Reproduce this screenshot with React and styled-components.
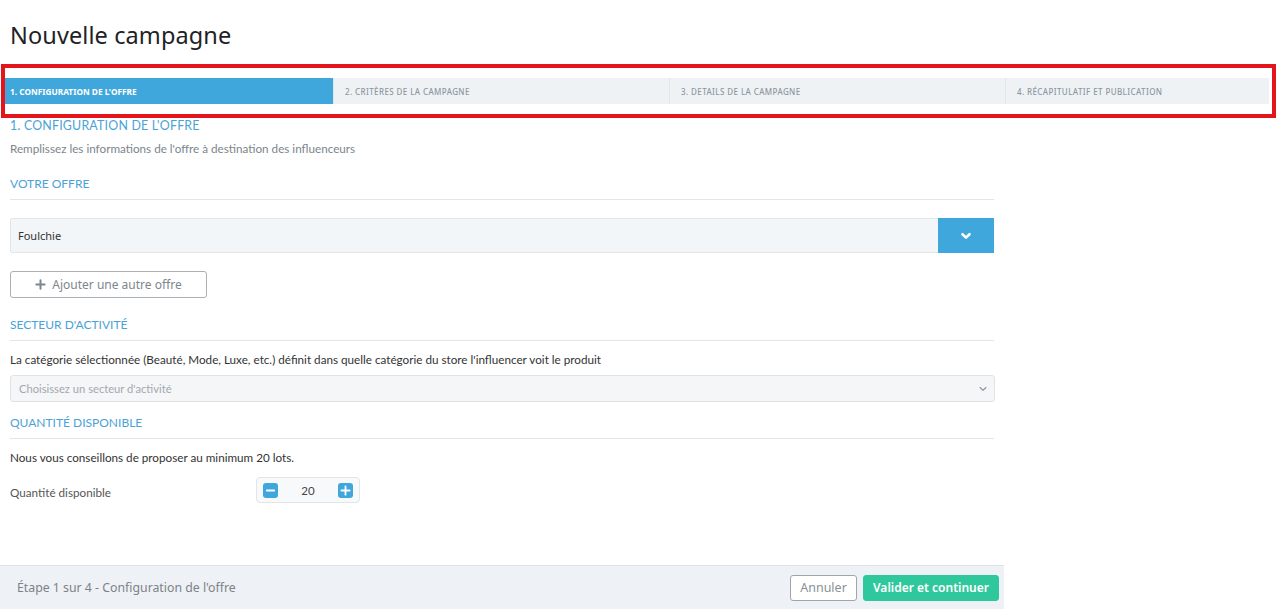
import React from "react";
import styled, { createGlobalStyle } from "styled-components";

const GlobalStyle = createGlobalStyle`
  html, body {
    margin: 0;
    padding: 0;
    background: #fff;
    font-family: Lato, "Open Sans", sans-serif;
  }
  * { box-sizing: border-box; }
`;

const Page = styled.div`
  width: 1280px;
  height: 609px;
  overflow: hidden;
  display: flex;
  flex-direction: column;
`;

const Title = styled.h1`
  margin: 0;
  padding: 19px 10px 0;
  height: 64px;
  font-family: "Noto Sans", "Open Sans", sans-serif;
  font-weight: 400;
  font-size: 23.5px;
  color: #1f2226;
  letter-spacing: 0.1px;
`;

const Highlight = styled.div`
  margin: 0 4px 0 1px;
  border: 4px solid #e3141c;
  padding: 10px 3px 10px 0;
  height: 54px;
`;

const Steps = styled.div`
  display: flex;
  height: 26px;
  background: #eff2f5;
`;

const Step = styled.div`
  flex: ${(p) => (p.$width ? `0 0 ${p.$width}px` : "1")};
  display: flex;
  align-items: center;
  background: ${(p) => (p.$active ? "#3fa7db" : "#eff2f5")};
  border-left: ${(p) => (p.$first ? "none" : "1px solid #e2e6ea")};
  color: ${(p) => (p.$active ? "#fff" : "#8c98a2")};
  font-family: "Noto Sans", sans-serif;
  font-size: ${(p) => (p.$active ? "8.3px" : "8px")};
  font-weight: ${(p) => (p.$active ? 700 : 500)};
  text-transform: uppercase;
  letter-spacing: ${(p) => (p.$active ? "0" : "0.4px")};
  padding-left: ${(p) => (p.$first ? "5px" : "11px")};
`;

const Content = styled.div`
  width: 1004px;
  padding: 0 10px;
  flex: 1;
`;

const StepTitle = styled.div`
  font-size: 12.4px;
  color: #4aa3d6;
  letter-spacing: 0.2px;
`;

const Intro = styled.div`
  font-size: 11.7px;
  color: #7b858d;
  margin-top: 8px;
`;

const Section = styled.div`
  font-size: 12px;
  color: #4aa3d6;
  text-transform: uppercase;
  padding: ${(p) => p.$pad || "22px 0 8px"};
  border-bottom: 1px solid #e3e6e9;
  width: 984px;
`;

const SelectBox = styled.div`
  display: flex;
  align-items: stretch;
  margin-top: 18px;
  width: 984px;
  height: 35px;
  background: #f3f6f8;
  border: 1px solid #e2e6e9;
  border-radius: 2px;
`;

const SelectValue = styled.div`
  flex: 1;
  display: flex;
  align-items: center;
  padding-left: 7px;
  font-family: "Noto Sans", sans-serif;
  font-size: 11px;
  color: #333;
`;

const SelectButton = styled.div`
  width: 56px;
  margin: -1px -1px -1px 0;
  background: #3fa7db;
  display: flex;
  align-items: center;
  justify-content: center;
`;

const OutlineButton = styled.button`
  margin-top: 18px;
  width: 197px;
  height: 27px;
  border: 1px solid #a9b0b6;
  border-radius: 3px;
  background: #fff;
  display: flex;
  align-items: center;
  justify-content: center;
  gap: 6px;
  font-family: "Noto Sans", sans-serif;
  font-size: 12px;
  color: #7e868d;
  padding: 0;
`;

const Help = styled.div`
  font-size: 11.7px;
  color: #333;
  margin-top: 11px;
`;

const NativeSelect = styled.div`
  margin-top: 9px;
  width: 985px;
  height: 27px;
  background: #f4f6f8;
  border: 1px solid #dfe3e6;
  border-radius: 3px;
  display: flex;
  align-items: center;
  justify-content: space-between;
  padding: 0 6px 0 8px;
  font-size: 11.2px;
  color: #a3a9ae;
`;

const QtyRow = styled.div`
  display: flex;
  align-items: center;
  margin-top: 13px;
`;

const QtyLabel = styled.div`
  width: 246px;
  font-size: 11.7px;
  color: #555;
  padding-top: 4px;
`;

const Stepper = styled.div`
  width: 104px;
  height: 26px;
  border: 1px solid #e2e6e9;
  border-radius: 4px;
  background: #f7f9fa;
  display: flex;
  align-items: center;
  justify-content: space-between;
  padding: 0 6px;
`;

const StepBtn = styled.div`
  width: 15px;
  height: 15px;
  border-radius: 3px;
  background: #3fa7db;
  display: flex;
  align-items: center;
  justify-content: center;
`;

const QtyValue = styled.div`
  font-size: 11.5px;
  color: #444;
`;

const Footer = styled.div`
  width: 1004px;
  height: 44px;
  background: #eef2f6;
  border-top: 1px solid #dde2e7;
  display: flex;
  align-items: center;
  justify-content: space-between;
  padding: 0 5px 0 17px;
`;

const FooterText = styled.div`
  font-family: "Noto Sans", sans-serif;
  font-size: 12.3px;
  color: #7c8288;
`;

const Actions = styled.div`
  display: flex;
  gap: 6px;
`;

const FooterButton = styled.button`
  height: 26px;
  width: ${(p) => (p.$primary ? "136px" : "67px")};
  padding: 0;
  border-radius: 3px;
  border: 1px solid ${(p) => (p.$primary ? "#2fc89c" : "#9ea5ab")};
  background: ${(p) => (p.$primary ? "#2fc89c" : "#fff")};
  color: ${(p) => (p.$primary ? "#fff" : "#8a9096")};
  font-family: "Noto Sans", sans-serif;
  font-size: ${(p) => (p.$primary ? "12px" : "12.5px")};
  font-weight: ${(p) => (p.$primary ? 600 : 400)};
`;

const Chevron = ({ color = "#fff", size = 12, width = 2.6 }) => (
  <svg width={size} height={size} viewBox="0 0 12 12">
    <path d="M2.5 4.2 L6 7.6 L9.5 4.2" fill="none" stroke={color} strokeWidth={width} strokeLinecap="round" strokeLinejoin="round" />
  </svg>
);

const Plus = ({ color, size = 12, width = 2 }) => (
  <svg width={size} height={size} viewBox="0 0 12 12">
    <path d="M6 1.5 V10.5 M1.5 6 H10.5" stroke={color} strokeWidth={width} strokeLinecap="round" />
  </svg>
);

const Minus = ({ color, size = 12, width = 2 }) => (
  <svg width={size} height={size} viewBox="0 0 12 12">
    <path d="M2 6 H10" stroke={color} strokeWidth={width} strokeLinecap="round" />
  </svg>
);

const steps = [
  { label: "1. Configuration de l'offre", width: 328 },
  { label: "2. Critères de la campagne", width: 336 },
  { label: "3. Details de la campagne", width: 336 },
  { label: "4. Récapitulatif et publication" },
];

export default function App() {
  return (
    <Page>
      <GlobalStyle />
      <Title>Nouvelle campagne</Title>
      <Highlight>
        <Steps>
          {steps.map((s, i) => (
            <Step key={s.label} $width={s.width} $active={i === 0} $first={i === 0}>
              {s.label}
            </Step>
          ))}
        </Steps>
      </Highlight>
      <Content>
        <StepTitle>1. CONFIGURATION DE L'OFFRE</StepTitle>
        <Intro>Remplissez les informations de l'offre à destination des influenceurs</Intro>
        <Section $pad="21px 0 8px">Votre offre</Section>
        <SelectBox>
          <SelectValue>Foulchie</SelectValue>
          <SelectButton>
            <Chevron />
          </SelectButton>
        </SelectBox>
        <OutlineButton>
          <Plus color="#7e868d" size={11} width={2.2} />
          Ajouter une autre offre
        </OutlineButton>
        <Section $pad="19px 0 8px">Secteur d'activité</Section>
        <Help>La catégorie sélectionnée (Beauté, Mode, Luxe, etc.) définit dans quelle catégorie du store l'influencer voit le produit</Help>
        <NativeSelect>
          Choisissez un secteur d'activité
          <Chevron color="#8d9399" size={10} width={1.4} />
        </NativeSelect>
        <Section $pad="13px 0 8px">Quantité disponible</Section>
        <Help>Nous vous conseillons de proposer au minimum 20 lots.</Help>
        <QtyRow>
          <QtyLabel>Quantité disponible</QtyLabel>
          <Stepper>
            <StepBtn>
              <Minus color="#fff" size={11} width={2} />
            </StepBtn>
            <QtyValue>20</QtyValue>
            <StepBtn>
              <Plus color="#fff" size={11} width={2} />
            </StepBtn>
          </Stepper>
        </QtyRow>
      </Content>
      <Footer>
        <FooterText>Étape 1 sur 4 - Configuration de l'offre</FooterText>
        <Actions>
          <FooterButton>Annuler</FooterButton>
          <FooterButton $primary>Valider et continuer</FooterButton>
        </Actions>
      </Footer>
    </Page>
  );
}
